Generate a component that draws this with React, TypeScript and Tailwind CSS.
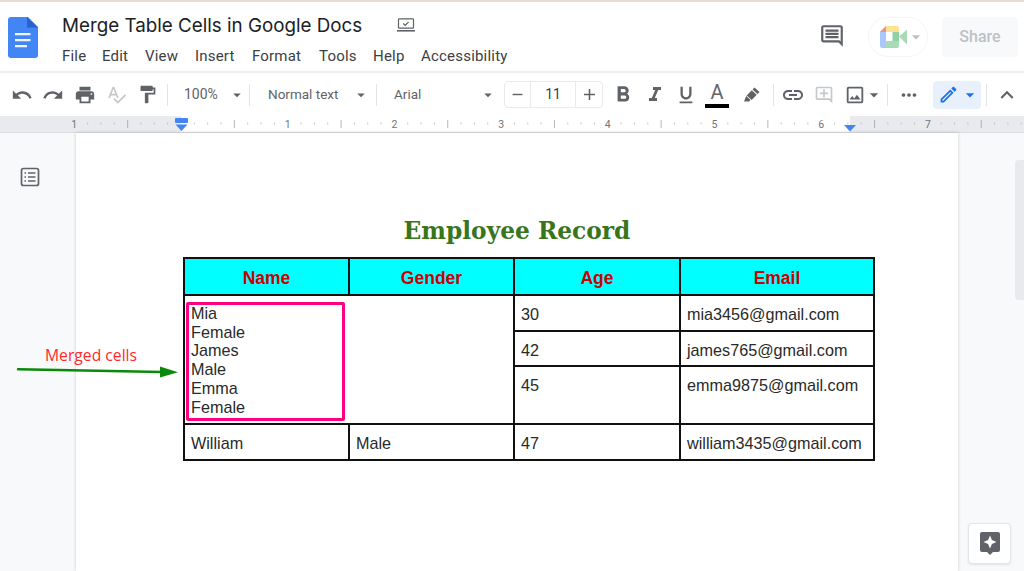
import React from 'react';
import {
  MdUndo,
  MdRedo,
  MdPrint,
  MdSpellcheck,
  MdFormatPaint,
  MdFormatBold,
  MdFormatItalic,
  MdFormatUnderlined,
  MdLink,
  MdOutlineAddComment,
  MdOutlineInsertPhoto,
  MdMoreHoriz,
  MdOutlineEdit,
  MdExpandLess,
  MdOutlineMessage,
  MdArrowDropDown,
  MdRemove,
  MdAdd,
} from 'react-icons/md';

const menuItems = [
  { name: 'File', cls: 'w-[40px]' },
  { name: 'Edit', cls: 'w-[43px]' },
  { name: 'View', cls: 'w-[50px]' },
  { name: 'Insert', cls: 'w-[57px]' },
  { name: 'Format', cls: 'w-[67px]' },
  { name: 'Tools', cls: 'w-[54px]' },
  { name: 'Help', cls: 'w-[48px]' },
  { name: 'Accessibility', cls: 'w-[100px]' },
];

const Divider = ({ cls }: { cls: string }) => <div className={`h-[22px] w-px bg-[#e2e4e7] shrink-0 ${cls}`} />;

const Caret = ({ cls }: { cls: string }) => (
  <div className={`w-[22px] flex justify-center shrink-0 ${cls}`}>
    <MdArrowDropDown className="w-[18px] h-[18px] text-[#5f6368]" />
  </div>
);

const DocsLogo = () => (
  <svg width="30" height="41" viewBox="0 0 30 41" className="shrink-0">
    <path d="M3 0h17l10 10v28a3 3 0 0 1-3 3H3a3 3 0 0 1-3-3V3a3 3 0 0 1 3-3z" fill="#4285f4" />
    <path d="M19 0l11 10.5H19z" fill="#2a62c9" />
    <path d="M7 16h15.500v2.200H7zM7 22h15.500v2.200H7zM7 28h12v2.200H7z" fill="#f1f5fe" />
  </svg>
);

const LaptopCheck = () => (
  <svg width="18" height="14" viewBox="0 0 18 14" fill="none" stroke="#5f6368" strokeWidth="1.2">
    <rect x="1.5" y="0.8" width="15" height="9.4" rx="0.8" />
    <path d="M0 12.8h18" strokeWidth="1.6" />
    <path d="M6.2 5.5l2 1.800 3.400-3.400" />
  </svg>
);

const MeetLogo = () => (
  <svg width="27" height="22" viewBox="0 0 27 22">
    <path d="M6 0h12v6H6v0H0z" fill="#f6b7ae" />
    <path d="M6 0v6H0z" fill="#f08f85" />
    <path d="M6 0h11a2 2 0 0 1 2 2v5h-7V6H6z" fill="#fde293" />
    <path d="M0 6h6v9H0z" fill="#a8c7fa" />
    <path d="M0 15h6v7H2a2 2 0 0 1-2-2z" fill="#a8c7fa" />
    <path d="M6 15h6v-1h7v6a2 2 0 0 1-2 2H6z" fill="#a8dab5" />
    <path d="M12 6h7v9h-7z" fill="#8fd0a4" />
    <path d="M19 10.5l8-7v15z" fill="#a8dab5" />
    <path d="M6 6h6.5v9H6z" fill="#ffffff" />
  </svg>
);

const Highlighter = () => (
  <svg width="20" height="20" viewBox="0 0 20 20" fill="#5f6368">
    <path d="M12.5 2.5l5 4.500-2 2-5-4.500z" />
    <path d="M9.7 5.3l5 4.500-5 5.200-5-4.500z" />
    <path d="M4.2 11l4.300 4-1.500 1.500H2z" />
  </svg>
);

const OutlineIcon = () => (
  <svg width="20" height="20" viewBox="0 0 20 20" fill="none" stroke="#5f6368" strokeWidth="1.7">
    <rect x="1.5" y="1.5" width="17" height="17" rx="2" />
    <path d="M4.5 6h1.500M8 6h7.500M4.500 10h1.500M8 10h7.500M4.500 14h1.500M8 14h7.500" />
  </svg>
);

const ExploreIcon = () => (
  <svg width="20" height="23" viewBox="0 0 20 23">
    <path d="M2 0h16a2 2 0 0 1 2 2v16a2 2 0 0 1-2 2h-5l-3 3-3-3H2a2 2 0 0 1-2-2V2a2 2 0 0 1 2-2z" fill="#5f6368" />
    <path d="M10 3.5l1.900 4.600 4.600 1.900-4.600 1.900L10 16.500l-1.900-4.600L3.500 10l4.600-1.900z" fill="#ffffff" />
  </svg>
);

const Ruler = () => {
  const inch = 106.7;
  const origin = 181;
  const ticks: React.ReactNode[] = [];
  for (let i = -8; i <= 64; i++) {
    if (i % 8 === 0) continue;
    const x = origin + (i * inch) / 8;
    const long = i % 4 === 0;
    ticks.push(
      <line
        key={i}
        x1={x}
        x2={x}
        y1={long ? 4 : 6.5}
        y2={long ? 12 : 8.5}
        stroke={long ? '#a0a4a8' : '#b4b7bb'}
        strokeWidth="0.8"
      />,
    );
  }
  const labels = [-1, 1, 2, 3, 4, 5, 6, 7];
  return (
    <svg width="1024" height="17" className="block">
      <rect x="0" y="0" width="1024" height="16" fill="#e8eaed" />
      <rect x="181" y="0" width="669" height="16" fill="#ffffff" />
      <rect x="0" y="16" width="1024" height="1" fill="#dadce0" />
      {ticks}
      {labels.map((n) => (
        <text
          key={n}
          x={origin + n * inch}
          y="12"
          textAnchor="middle"
          fontSize="10.5"
          fill="#70757a"
          fontFamily="Roboto, sans-serif"
        >
          {Math.abs(n)}
        </text>
      ))}
      <rect x="175" y="2" width="13" height="5" rx="1" fill="#4285f4" />
      <path d="M175.5 8.5h12l-6 6.500z" fill="#4285f4" />
      <path d="M844 9h12l-6 6.500z" fill="#4285f4" />
    </svg>
  );
};

const td = 'border-2 border-[#111111] px-[6px] pt-[9px] align-top';
const th = 'border-2 border-[#111111] bg-[#00ffff] text-[#cc0000] text-[17.5px] font-bold text-center align-middle pt-[3px]';

export default function App() {
  return (
    <div className="relative w-[1024px] h-[571px] overflow-hidden bg-white [font-family:Roboto,sans-serif]">
      <div className="h-[2px] bg-[#ecdcd6]" />

      {/* Title bar */}
      <header className="h-[71px] flex border-b-2 border-[#eceef0]">
        <div className="pl-2 pt-[15px] w-[62px] shrink-0">
          <DocsLogo />
        </div>
        <div className="flex-1 pt-[11px]">
          <div className="flex items-center h-[26px]">
            <span className="text-[18.8px] text-[#202124] leading-[26px] [font-family:Inter,sans-serif] whitespace-nowrap">
              Merge Table Cells in Google Docs
            </span>
            <span className="ml-[35px] -mt-[3px]">
              <LaptopCheck />
            </span>
          </div>
          <nav className="flex mt-[7px] text-[15px] leading-5 text-[#3c4043] tracking-[0.2px]">
            {menuItems.map((item) => (
              <span key={item.name} className={item.cls}>
                {item.name}
              </span>
            ))}
          </nav>
        </div>
        <div className="flex items-start pt-[15px] pr-[6px]">
          <div className="mt-[6px] mr-[23px]">
            <MdOutlineMessage className="w-[26px] h-[26px] -scale-x-100 text-[#5f6368]" />
          </div>
          <div className="flex items-center w-[60px] h-10 rounded-full border border-[#f4f5f6] pl-[11px]">
            <MeetLogo />
            <MdArrowDropDown className="w-5 h-5 text-[#bdc1c6] -ml-[1px]" />
          </div>
          <div className="ml-[14px] w-[76px] h-10 rounded bg-[#f8f9fa] text-[#bdc1c6] text-[16px] font-medium flex items-center justify-center">
            Share
          </div>
        </div>
      </header>

      {/* Toolbar */}
      <div className="h-[43px] flex items-center pl-[6px] text-[#5f6368] text-[14px] whitespace-nowrap">
        <MdUndo className="w-[22px] h-[22px] ml-[5px] shrink-0" />
        <MdRedo className="w-[22px] h-[22px] ml-[9px] shrink-0" />
        <MdPrint className="w-[22px] h-[22px] ml-[10px] shrink-0" />
        <MdSpellcheck className="w-[21px] h-[21px] ml-[10px] text-[#c4c7cb] shrink-0" />
        <MdFormatPaint className="w-[21px] h-[21px] ml-[10px] shrink-0" />
        <Divider cls="ml-[9px]" />
        <span className="ml-[16px] w-[41px] shrink-0">100%</span>
        <Caret cls="ml-[1px]" />
        <Divider cls="ml-[1px]" />
        <span className="ml-[18px] w-[72px] shrink-0 text-[13.5px]">Normal text</span>
        <Caret cls="ml-[10px]" />
        <Divider cls="ml-[4px]" />
        <span className="ml-[17px] w-[60px] shrink-0 text-[13.5px]">Arial</span>
        <Caret cls="ml-[23px]" />
        <div className="ml-[5px] flex items-center h-[27px] w-[99px] shrink-0 rounded border border-[#e8eaed] text-[#3c4043]">
          <div className="w-[26px] h-full flex items-center justify-center border-r border-[#e8eaed]">
            <MdRemove className="w-[17px] h-[17px] text-[#5f6368]" />
          </div>
          <div className="w-[45px] h-full flex items-center justify-center border-r border-[#e8eaed]">11</div>
          <div className="flex-1 h-full flex items-center justify-center">
            <MdAdd className="w-[19px] h-[19px] text-[#5f6368]" />
          </div>
        </div>
        <MdFormatBold className="w-[26px] h-[26px] ml-[7px] shrink-0" />
        <MdFormatItalic className="w-[24px] h-[24px] ml-[7px] shrink-0" />
        <MdFormatUnderlined className="w-[22px] h-[22px] ml-[8px] shrink-0" />
        <div className="ml-[8px] w-[24px] h-[27px] flex flex-col items-center shrink-0">
          <span className="text-[20px] leading-[22px] text-[#5f6368]">A</span>
          <span className="block mt-[1px] w-[24px] h-[4px] bg-black" />
        </div>
        <span className="ml-[13px] shrink-0">
          <Highlighter />
        </span>
        <Divider cls="ml-[11px]" />
        <MdLink className="w-[24px] h-[24px] ml-[7px] shrink-0" />
        <MdOutlineAddComment className="w-[20px] h-[20px] ml-[9px] text-[#c4c7cb] shrink-0" />
        <MdOutlineInsertPhoto className="w-[22px] h-[22px] ml-[10px] shrink-0" />
        <MdArrowDropDown className="w-[20px] h-[20px] -ml-[2px] shrink-0" />
        <Divider cls="ml-[3px]" />
        <MdMoreHoriz className="w-[22px] h-[22px] ml-[10px] shrink-0" />
        <div className="ml-[13px] w-[48px] h-[28px] shrink-0 rounded bg-[#e8f0fe] flex items-center pl-[5px] text-[#1a73e8]">
          <MdOutlineEdit className="w-[21px] h-[21px]" />
          <MdArrowDropDown className="w-[20px] h-[20px] ml-[1px]" />
        </div>
        <Divider cls="ml-[5px]" />
        <MdExpandLess className="w-[26px] h-[26px] ml-[7px] shrink-0" />
      </div>

      <Ruler />

      {/* Document area */}
      <main className="h-[438px] flex bg-[#f8f9fa]">
        <aside className="w-[76px] shrink-0 pl-5 pt-[34px]">
          <OutlineIcon />
        </aside>
        <div className="w-[882px] shrink-0 bg-white shadow-[0_0_3px_rgba(60,64,67,0.25)] pt-[82px]">
          <h1 className="text-center text-[#38761d] font-bold text-[23.3px] leading-[32px] [font-family:DejaVu_Serif,serif]">
            Employee Record
          </h1>
          <table className="mt-[10px] ml-[107px] w-[690px] table-fixed border-collapse [font-family:Liberation_Sans,sans-serif] text-[16.2px] leading-[18.7px] text-[#2a2a2a]">
            <colgroup>
              <col className="w-[165px]" />
              <col className="w-[165px]" />
              <col className="w-[166px]" />
              <col className="w-[194px]" />
            </colgroup>
            <tbody>
              <tr className="h-[37px]">
                <th className={th}>Name</th>
                <th className={th}>Gender</th>
                <th className={th}>Age</th>
                <th className={th}>Email</th>
              </tr>
              <tr className="h-[36px]">
                <td className="border-2 border-[#111111] px-[6px] pt-[8px] align-top" colSpan={2} rowSpan={3}>
                  Mia
                  <br />
                  Female
                  <br />
                  James
                  <br />
                  Male
                  <br />
                  Emma
                  <br />
                  Female
                </td>
                <td className={td}>30</td>
                <td className={td}>mia3456@gmail.com</td>
              </tr>
              <tr className="h-[35px]">
                <td className={td}>42</td>
                <td className={td}>james765@gmail.com</td>
              </tr>
              <tr className="h-[58px]">
                <td className={td}>45</td>
                <td className={td}>emma9875@gmail.com</td>
              </tr>
              <tr className="h-[36px]">
                <td className={td}>William</td>
                <td className={td}>Male</td>
                <td className={td}>47</td>
                <td className={td}>william3435@gmail.com</td>
              </tr>
            </tbody>
          </table>
        </div>
        <aside className="flex-1 relative">
          <div className="absolute right-0 top-[27px] w-[9px] h-[140px] rounded-l bg-[#e8eaed]" />
        </aside>
      </main>

      {/* Annotations drawn over the page */}
      <div className="absolute left-[186px] top-[302px] w-[159px] h-[119px] border-[3px] border-[#ff0080] rounded-[2px]" />
      <span className="absolute left-[45px] top-[345px] text-[15.7px] leading-5 text-[#ff2a2a] [font-family:Open_Sans,sans-serif]">
        Merged cells
      </span>
      <svg className="absolute left-[16px] top-[362px]" width="164" height="16" viewBox="0 0 164 16">
        <path d="M2 7.2L146 10" stroke="#0a8a0a" strokeWidth="2.4" strokeLinecap="round" />
        <path d="M144 4.500L162 10.200 144 15.500z" fill="#0a8a0a" />
      </svg>
      <div className="absolute left-[968px] top-[523px] w-[43px] h-[41px] bg-white border border-[#e3e5e8] rounded flex items-center justify-center shadow-[0_1px_2px_rgba(60,64,67,0.12)]">
        <ExploreIcon />
      </div>
    </div>
  );
}
